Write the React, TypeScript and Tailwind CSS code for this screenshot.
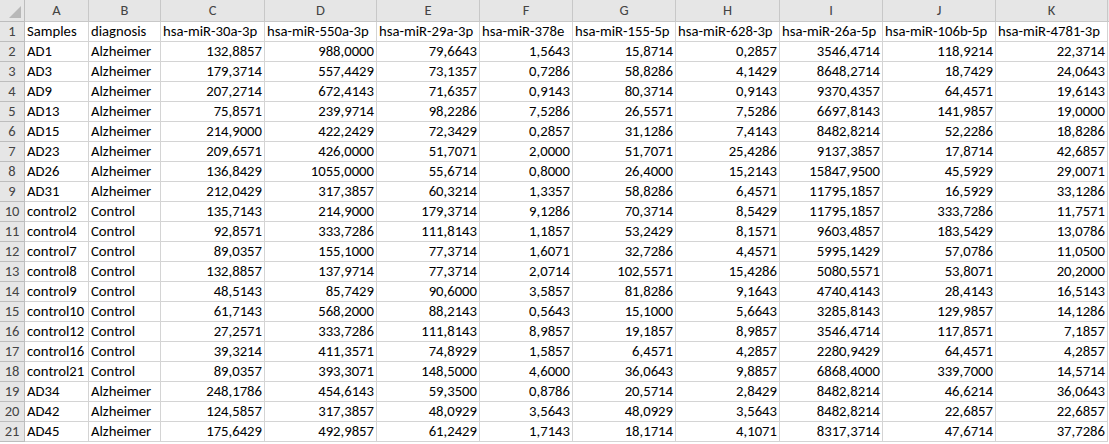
const cols = ["A", "B", "C", "D", "E", "F", "G", "H", "I", "J", "K"];
const widths = [64, 72, 104, 112, 103, 93, 103, 104, 103, 113, 112];

const header = ["Samples", "diagnosis", "hsa-miR-30a-3p", "hsa-miR-550a-3p", "hsa-miR-29a-3p", "hsa-miR-378e", "hsa-miR-155-5p", "hsa-miR-628-3p", "hsa-miR-26a-5p", "hsa-miR-106b-5p", "hsa-miR-4781-3p"];

const rows: string[][] = [
  ["AD1", "Alzheimer", "132,8857", "988,0000", "79,6643", "1,5643", "15,8714", "0,2857", "3546,4714", "118,9214", "22,3714"],
  ["AD3", "Alzheimer", "179,3714", "557,4429", "73,1357", "0,7286", "58,8286", "4,1429", "8648,2714", "18,7429", "24,0643"],
  ["AD9", "Alzheimer", "207,2714", "672,4143", "71,6357", "0,9143", "80,3714", "0,9143", "9370,4357", "64,4571", "19,6143"],
  ["AD13", "Alzheimer", "75,8571", "239,9714", "98,2286", "7,5286", "26,5571", "7,5286", "6697,8143", "141,9857", "19,0000"],
  ["AD15", "Alzheimer", "214,9000", "422,2429", "72,3429", "0,2857", "31,1286", "7,4143", "8482,8214", "52,2286", "18,8286"],
  ["AD23", "Alzheimer", "209,6571", "426,0000", "51,7071", "2,0000", "51,7071", "25,4286", "9137,3857", "17,8714", "42,6857"],
  ["AD26", "Alzheimer", "136,8429", "1055,0000", "55,6714", "0,8000", "26,4000", "15,2143", "15847,9500", "45,5929", "29,0071"],
  ["AD31", "Alzheimer", "212,0429", "317,3857", "60,3214", "1,3357", "58,8286", "6,4571", "11795,1857", "16,5929", "33,1286"],
  ["control2", "Control", "135,7143", "214,9000", "179,3714", "9,1286", "70,3714", "8,5429", "11795,1857", "333,7286", "11,7571"],
  ["control4", "Control", "92,8571", "333,7286", "111,8143", "1,1857", "53,2429", "8,1571", "9603,4857", "183,5429", "13,0786"],
  ["control7", "Control", "89,0357", "155,1000", "77,3714", "1,6071", "32,7286", "4,4571", "5995,1429", "57,0786", "11,0500"],
  ["control8", "Control", "132,8857", "137,9714", "77,3714", "2,0714", "102,5571", "15,4286", "5080,5571", "53,8071", "20,2000"],
  ["control9", "Control", "48,5143", "85,7429", "90,6000", "3,5857", "81,8286", "9,1643", "4740,4143", "28,4143", "16,5143"],
  ["control10", "Control", "61,7143", "568,2000", "88,2143", "0,5643", "15,1000", "5,6643", "3285,8143", "129,9857", "14,1286"],
  ["control12", "Control", "27,2571", "333,7286", "111,8143", "8,9857", "19,1857", "8,9857", "3546,4714", "117,8571", "7,1857"],
  ["control16", "Control", "39,3214", "411,3571", "74,8929", "1,5857", "6,4571", "4,2857", "2280,9429", "64,4571", "4,2857"],
  ["control21", "Control", "89,0357", "393,3071", "148,5000", "4,6000", "36,0643", "9,8857", "6868,4000", "339,7000", "14,5714"],
  ["AD34", "Alzheimer", "248,1786", "454,6143", "59,3500", "0,8786", "20,5714", "2,8429", "8482,8214", "46,6214", "36,0643"],
  ["AD42", "Alzheimer", "124,5857", "317,3857", "48,0929", "3,5643", "48,0929", "3,5643", "8482,8214", "22,6857", "22,6857"],
  ["AD45", "Alzheimer", "175,6429", "492,9857", "61,2429", "1,7143", "18,1714", "4,1071", "8317,3714", "47,6714", "37,7286"],
];

function Row({ n, cells }: { n: number; cells: string[] }) {
  return (
    <div className="flex h-[20px]">
      <div className="w-[25px] shrink-0 flex items-center justify-center bg-[#e6e6e6] border-r border-b border-[#bdbdbd] text-[#444] text-[14.5px]">{n}</div>
      {cells.map((c, i) => (
        <div
          key={i}
          style={{ width: widths[i] }}
          className={`shrink-0 flex items-center px-[2px] border-r border-b border-[#d4d4d4] text-[14.7px] text-black whitespace-nowrap overflow-hidden ${n > 1 && i > 1 ? "justify-end" : ""}`}
        >
          {c}
        </div>
      ))}
    </div>
  );
}

export default function App() {
  return (
    <div className="w-[1109px] h-[444px] overflow-hidden bg-white" style={{ fontFamily: "Carlito, 'Liberation Sans', sans-serif" }}>
      <div className="flex h-[22px]">
        <div className="w-[25px] shrink-0 bg-[#e6e6e6] border-r border-b border-[#bdbdbd] relative">
          <div className="absolute right-[3px] bottom-[3px] w-0 h-0 border-l-[12px] border-l-transparent border-b-[12px] border-b-[#b8b8b8]" />
        </div>
        {cols.map((c, i) => (
          <div key={c} style={{ width: widths[i] }} className="shrink-0 flex items-center justify-center bg-[#e6e6e6] border-r border-b border-[#c8c8c8] text-[#444] text-[14.5px]">
            {c}
          </div>
        ))}
        <div className="flex-1 bg-[#e6e6e6] border-b border-[#c8c8c8]" />
      </div>
      <Row n={1} cells={header} />
      {rows.map((r, i) => (
        <Row key={i} n={i + 2} cells={r} />
      ))}
    </div>
  );
}
